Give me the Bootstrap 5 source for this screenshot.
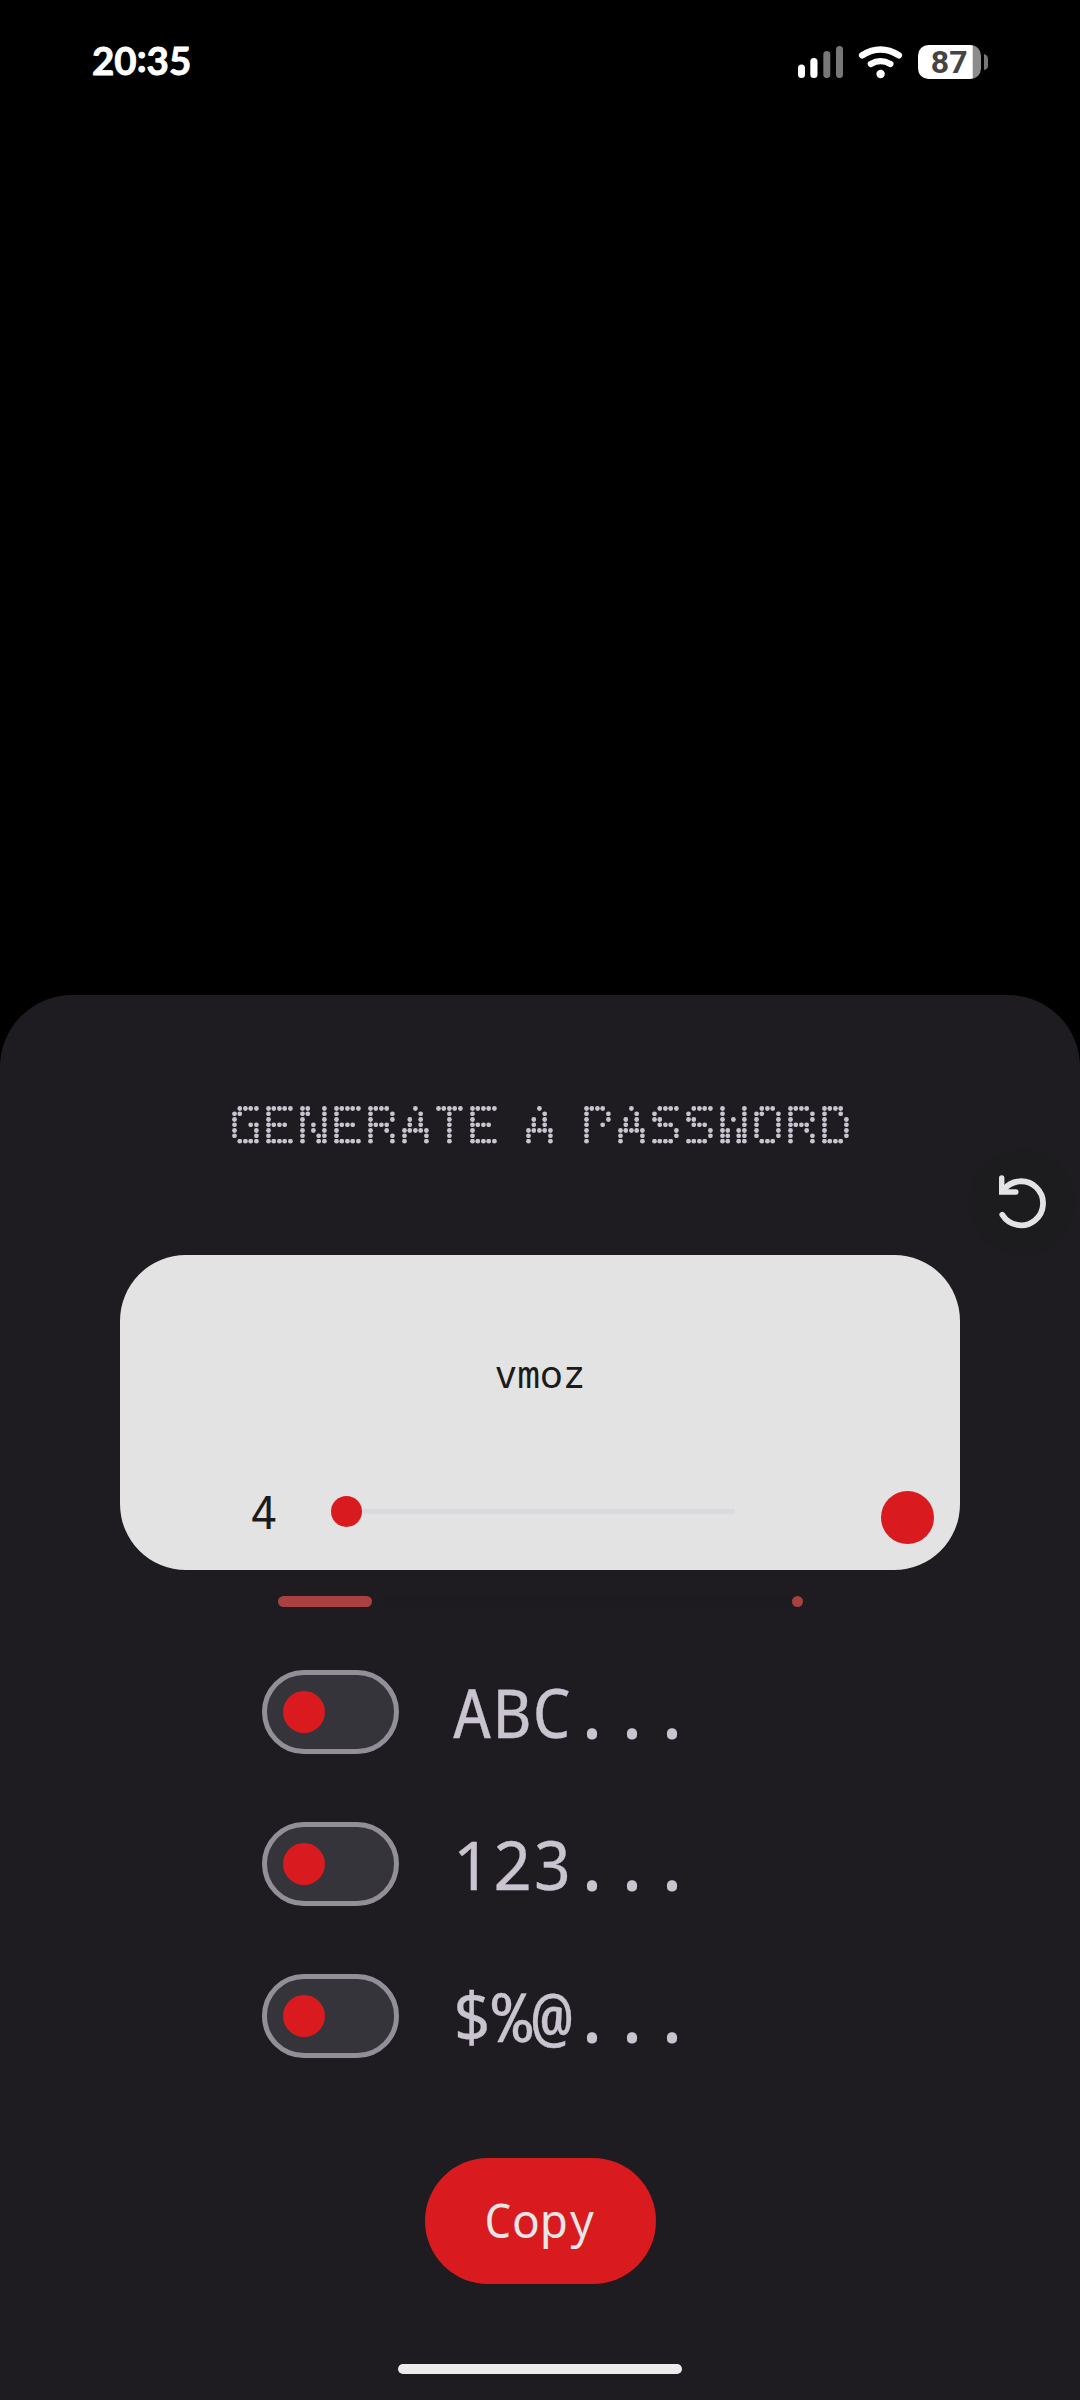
<!DOCTYPE html>
<html lang="en">
<head>
<meta charset="utf-8">
<meta name="viewport" content="width=device-width, initial-scale=1">
<title>Generate a password</title>
<link href="https://cdn.jsdelivr.net/npm/bootstrap@5.3.0/dist/css/bootstrap.min.css" rel="stylesheet">
<style>
  body { background: #000; font-family: "Noto Sans Mono", "DejaVu Sans Mono", monospace; }
  .screen { width: 1080px; height: 2400px; }
  .status { height: 995px; padding: 37px 90px 0 92px; color: #fff; }
  .clock { font: 700 38.5px/46px Lato, sans-serif; -webkit-text-stroke: .9px #fff; }
  .clock-sep { transform: translateY(-3px); }
  .indicators { margin-top: 5px; }
  .sheet { height: 1405px; background: #1e1c20; border-radius: 72px 72px 0 0; padding-top: 90px; }
  .heading-dots { height: 80px; }
  .refresh { width: 106px; height: 106px; background: #1c1c1e; margin: -16px 5px 0 auto; }
  .pass-card { width: 840px; height: 315px; background: #e3e3e3; border-radius: 66px; padding: 90px 26px 0 130px; color: #1b1b1b; }
  .pass-text { font-size: 38px; line-height: 56px; margin-right: 104px; }
  .len-row { height: 60px; margin-top: 80px; }
  .len-num { font-size: 46px; line-height: 60px; width: 28px; }
  .slider { width: 404px; margin-left: 53px; }
  .knob { width: 31px; height: 31px; background: #d91b1f; }
  .rail { height: 5px; background: #d9d9de; }
  .big-dot { width: 53px; height: 53px; background: #d91b1f; margin-top: 12px; }
  .strength { width: 525px; height: 11px; margin-top: 26px; }
  .strength-on { width: 94px; background: #a94041; }
  .strength-off { background: #1c1c1e; margin-left: 11px; }
  .strength-end { width: 11px; height: 11px; background: #a94041; }
  .options { margin: 63px 0 0 262px; gap: 68px; }
  .pill { width: 137px; height: 84px; border: 5.5px solid #938f99; background: #36343b; padding-left: 16px; }
  .pill-knob { width: 42px; height: 42px; background: #d91b1f; }
  .opt-text { font-size: 66.7px; line-height: 84px; height: 84px; color: #cac4d0; margin-left: 53px; padding-top: 1px; -webkit-text-stroke: .3px #cac4d0; }
  .opt-dots { -webkit-text-stroke: 2px #cac4d0; }
  .plain-one { display: inline-block; width: 40px; text-align: center; font-family: "Noto Sans", sans-serif; line-height: 1; }
  .copy { width: 231px; height: 126px; margin-top: 100px; background: #d91b1f; color: #e6e6e6; font-size: 46.5px; border: 0; }
  .home { width: 284px; height: 10px; background: #ececec; margin-top: 80px; }
</style>
</head>
<body>
<main class="screen overflow-hidden">
  <header class="status d-flex justify-content-between align-items-start">
    <div class="clock">20<span class="clock-sep d-inline-block">:</span>35</div>
    <svg class="indicators" width="194" height="42" viewBox="796 42 194 42">
      <rect x="798" y="64.5" width="7" height="13.5" rx="3.5" fill="#fff"/>
      <rect x="810.3" y="58" width="7.2" height="20" rx="3.5" fill="#fff"/>
      <rect x="823.3" y="51" width="7" height="27" rx="3.5" fill="#777"/>
      <rect x="836" y="46" width="7" height="32" rx="3.5" fill="#777"/>
      <g fill="none" stroke="#fff" stroke-linecap="round">
        <path d="M862.2 55.2Q880.5 43.8 898.8 55.2" stroke-width="6.6"/>
        <path d="M870.8 64Q880.5 58.4 890.4 64" stroke-width="6.2"/>
      </g>
      <circle cx="880.6" cy="74" r="4.2" fill="#fff"/>
      <clipPath id="cell"><rect x="918" y="45" width="63" height="34" rx="10.5"/></clipPath>
      <g clip-path="url(#cell)"><rect x="918" y="45" width="55" height="34" fill="#fff"/><rect x="972.7" y="45" width="9" height="34" fill="#8c8c8c"/></g>
      <path d="M984 54q4 1 4 5v7q0 3-4 4z" fill="#777"/>
      <text x="949.2" y="73.3" text-anchor="middle" font-family="Roboto, sans-serif" font-weight="700" font-size="32" fill="#444">87</text>
    </svg>
  </header>

  <section class="sheet">
    <h1 class="heading-dots m-0 d-flex">
      <svg width="1080" height="80" viewBox="0 1085 1080 80">
        <defs>
          <g id="ptrow"><rect x="5" width="1" height="1"/><rect x="10" width="1" height="1"/><rect x="16" width="1" height="1"/><rect x="21" width="1" height="1"/><rect x="27" width="1" height="1"/></g>
          <g id="dotrow"><circle cx="5.5" cy=".5" r="2.4"/><circle cx="10.8" cy=".5" r="2.4"/><circle cx="16.4" cy=".5" r="2.4"/><circle cx="21.7" cy=".5" r="2.4"/><circle cx="27.4" cy=".5" r="2.4"/></g>
          <pattern id="pts" patternUnits="userSpaceOnUse" x="-5" y="-5" width="34" height="50"><g fill="#fff">
            <use href="#ptrow" y="5"/><use href="#ptrow" y="10"/><use href="#ptrow" y="16"/><use href="#ptrow" y="21"/><use href="#ptrow" y="27"/><use href="#ptrow" y="32"/><use href="#ptrow" y="38"/></g></pattern>
          <pattern id="rounds" patternUnits="userSpaceOnUse" x="-5" y="-5" width="34" height="50"><g fill="#fff">
            <use href="#dotrow" y="5"/><use href="#dotrow" y="10.3"/><use href="#dotrow" y="16"/><use href="#dotrow" y="21.3"/><use href="#dotrow" y="27"/><use href="#dotrow" y="32.3"/><use href="#dotrow" y="37.7"/></g></pattern>
          <mask id="sample" maskUnits="userSpaceOnUse" x="-4" y="-5" width="290" height="50"><rect x="-4" y="-5" width="290" height="50" fill="url(#pts)"/></mask>
          <mask id="round" maskUnits="userSpaceOnUse" x="-4" y="-5" width="290" height="50"><rect x="-4" y="-5" width="290" height="50" fill="url(#rounds)"/></mask>
          <filter id="grow" filterUnits="userSpaceOnUse" x="-4" y="-5" width="290" height="50" color-interpolation-filters="sRGB">
            <feComponentTransfer><feFuncA type="linear" slope="12" intercept="-5"/></feComponentTransfer>
            <feMorphology operator="dilate" radius="2"/>
            <feComponentTransfer result="on"><feFuncA type="linear" slope="3"/></feComponentTransfer>
            <feFlood flood-color="#cac4d0"/><feComposite operator="in" in2="on"/>
          </filter>
        </defs>
        <g font-family="DejaVu Sans Mono, monospace" font-size="51" text-anchor="middle" fill="#cac4d0">
          <g transform="translate(234 1108)" mask="url(#round)"><g filter="url(#grow)"><g mask="url(#sample)"><text transform="scale(1.08 1)" x="10.3,40.9,73.2,103.8,136.9,168.1,199.5,229.8" y="35.5">GENERATE</text></g></g></g>
          <g transform="translate(528 1108)" mask="url(#round)"><g filter="url(#grow)"><g mask="url(#sample)"><text transform="scale(1.08 1)" x="10.6" y="35.5">A</text></g></g></g>
          <g transform="translate(586 1108)" mask="url(#round)"><g filter="url(#grow)"><g mask="url(#sample)"><text transform="scale(1.08 1)" x="9.1,42.1,74,105.5,136.6,168.1,199.9,230.8" y="35.5">PASSWORD</text></g></g></g>
        </g>
      </svg>
    </h1>
    <div class="refresh rounded-circle">
      <svg width="106" height="106" viewBox="969 1149 106 106" fill="none" stroke="#e3e3e3">
        <path d="M1002.3 1214.8A22 22 0 1 0 1003.5 1190" stroke-width="5.8" stroke-linecap="round"/>
        <path d="M1001.7 1178V1192H1015.8" stroke-width="5.4" stroke-linecap="round"/>
      </svg>
    </div>
    <div class="pass-card mx-auto">
      <div class="pass-text text-center">vmoz</div>
      <div class="len-row d-flex align-items-center">
        <div class="len-num">4</div>
        <div class="slider d-flex align-items-center"><div class="knob rounded-circle"></div><div class="rail flex-grow-1"></div></div>
        <div class="big-dot rounded-circle ms-auto"></div>
      </div>
    </div>
    <div class="strength mx-auto d-flex">
      <div class="strength-on rounded-pill"></div>
      <div class="strength-off rounded-pill flex-grow-1 d-flex justify-content-end"><div class="strength-end rounded-circle"></div></div>
    </div>
    <div class="options d-flex flex-column">
      <div class="d-flex align-items-center"><div class="pill rounded-pill d-flex align-items-center"><div class="pill-knob rounded-circle"></div></div><div class="opt-text">ABC<span class="opt-dots">...</span></div></div>
      <div class="d-flex align-items-center"><div class="pill rounded-pill d-flex align-items-center"><div class="pill-knob rounded-circle"></div></div><div class="opt-text"><span class="plain-one">1</span>23<span class="opt-dots">...</span></div></div>
      <div class="d-flex align-items-center"><div class="pill rounded-pill d-flex align-items-center"><div class="pill-knob rounded-circle"></div></div><div class="opt-text">$%@<span class="opt-dots">...</span></div></div>
    </div>
    <button class="copy btn rounded-pill d-block mx-auto">Copy</button>
    <div class="home rounded-pill mx-auto"></div>
  </section>
</main>
<script src="https://cdn.jsdelivr.net/npm/bootstrap@5.3.0/dist/js/bootstrap.bundle.min.js"></script>
</body>
</html>
